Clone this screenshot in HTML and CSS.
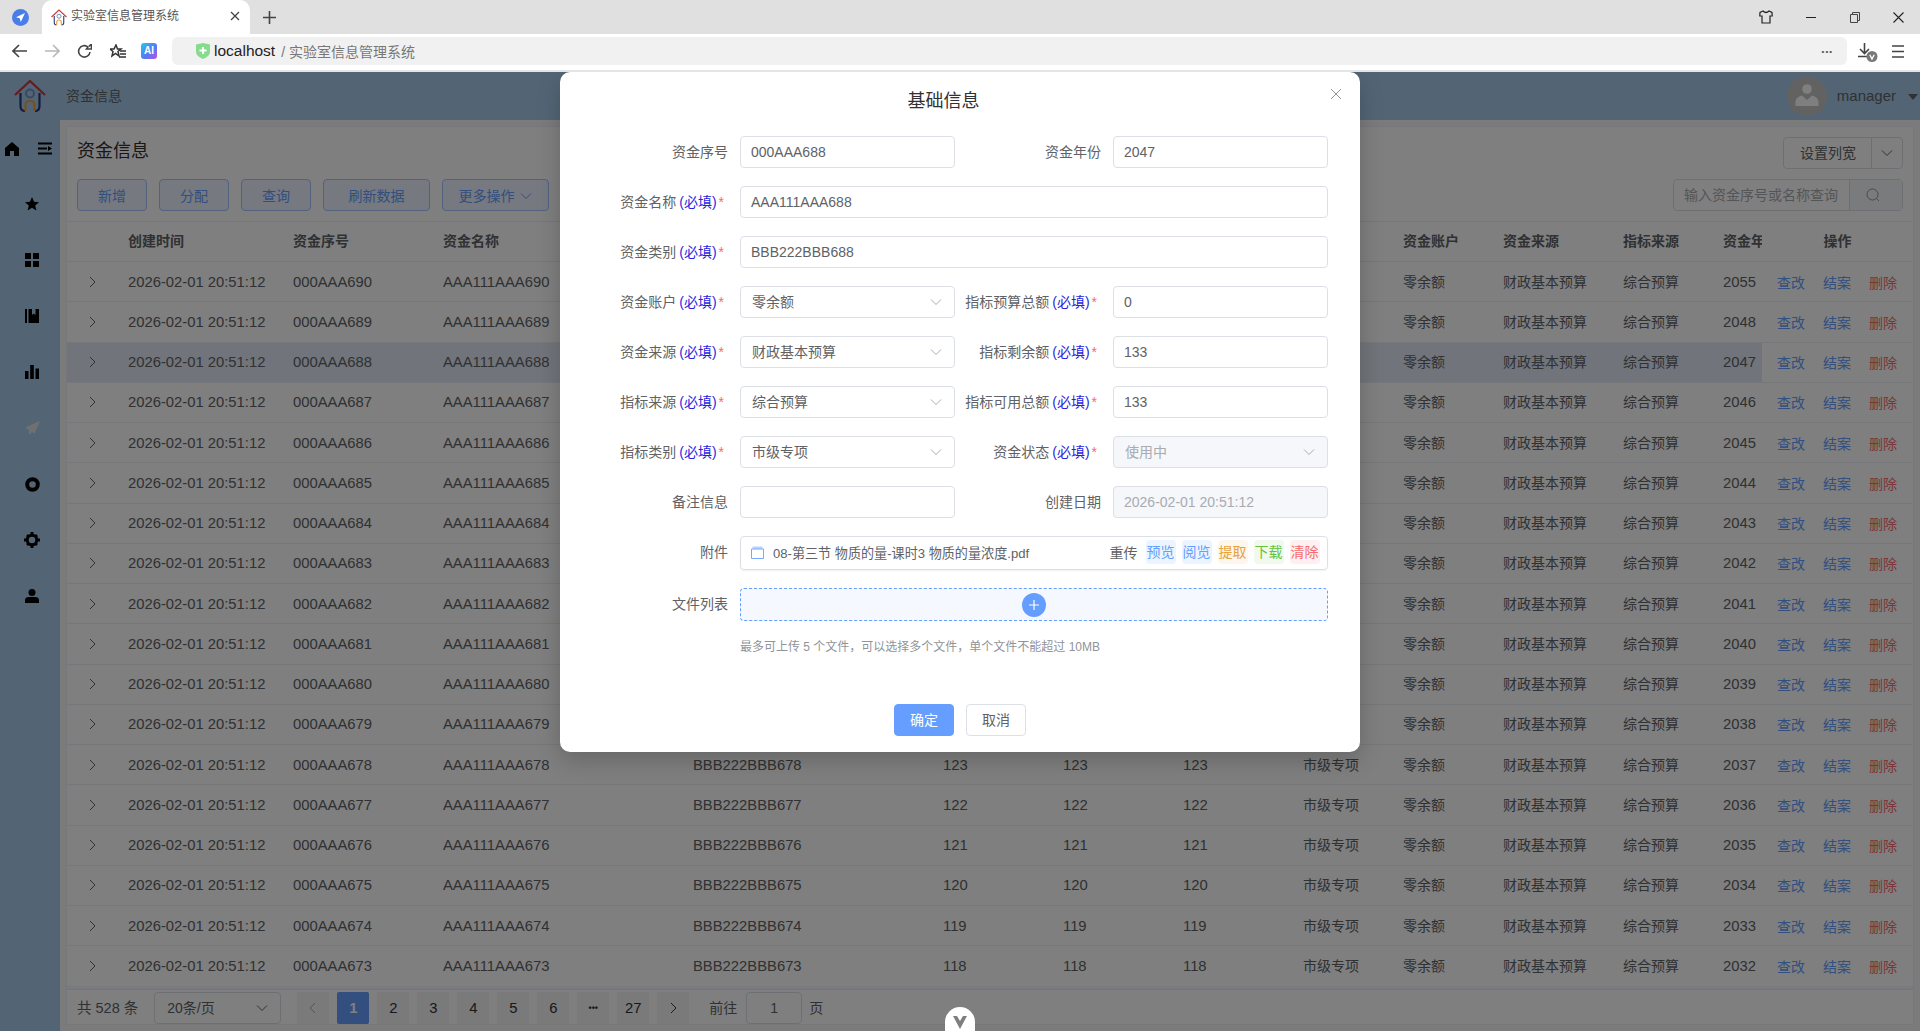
FILE: index.html
```html
<!DOCTYPE html>
<html lang="zh-CN">
<head>
  <meta charset="UTF-8">
  <meta name="viewport" content="width=device-width, initial-scale=1.0">
  <title>实验室信息管理系统</title>
  <link rel="stylesheet" href="styles.css">
</head>
<body>
  <svg class="defs" width="0" height="0">
    <symbol id="house" viewBox="0 0 32 32">
      <path d="M1 15 16 1 31 15" fill="none" stroke="#c93a3a" stroke-width="2.2"/>
      <path d="M6.500 13V26Q6.500 31 11 31M25.500 13V26Q25.500 31 21 31" fill="none" stroke="#2a3a78" stroke-width="2.2"/>
      <circle cx="16" cy="13.500" r="4" fill="none" stroke="#6f93c8" stroke-width="2"/>
      <path d="M11.500 31V25Q11.500 21 16 21T20.500 25V31" fill="none" stroke="#e8a23c" stroke-width="2.2"/>
    </symbol>
    <symbol id="chev" viewBox="0 0 12 12">
      <path d="M1 3.500 6 8.500 11 3.500" fill="none" stroke="currentColor" stroke-width="1"/>
    </symbol>
    <symbol id="arrow-right" viewBox="0 0 12 12">
      <path d="M4 1 9 6 4 11" fill="none" stroke="currentColor" stroke-width="1"/>
    </symbol>
    <symbol id="arrow-left" viewBox="0 0 12 12">
      <path d="M8 1 3 6 8 11" fill="none" stroke="currentColor" stroke-width="1"/>
    </symbol>
  </svg>

  <!-- browser chrome -->
  <div class="browser">
    <div class="tabbar">
      <svg class="tg-icon" width="17" height="17" viewBox="0 0 17 17">
        <circle cx="8.500" cy="8.500" r="8.500" fill="#4a7de8"/>
        <path d="M13 4 4 8.200 7.700 9.300 8.800 13Z" fill="#fff"/>
      </svg>
      <div class="tab">
        <svg class="tab-logo" width="16" height="17"><use href="#house"/></svg>
        <span class="tab-title">实验室信息管理系统</span>
        <svg class="tab-close" width="10" height="10" viewBox="0 0 10 10"><path d="M1 1 9 9M9 1 1 9" stroke="#444" stroke-width="1.300"/></svg>
      </div>
      <svg class="tab-new" width="13" height="13" viewBox="0 0 13 13"><path d="M6.500 0V13M0 6.500H13" stroke="#444" stroke-width="1.600"/></svg>
      <div class="win-btns">
        <svg width="14" height="14" viewBox="0 0 14 14"><path d="M4 1 1 2.500 .8 6 3 6V13H11V6L13.200 6 13 2.500 10 1Q7 4 4 1Z" fill="none" stroke="#222" stroke-width="1.200"/></svg>
        <svg width="10" height="10" viewBox="0 0 10 10"><path d="M0 5.500H10" stroke="#222" stroke-width="1"/></svg>
        <svg width="10" height="11" viewBox="0 0 10 11"><path d="M.5 2.500H7.500V10.500H.5ZM2.500 2.500V.5H9.500V8.500H7.500" fill="none" stroke="#444" stroke-width="1"/></svg>
        <svg width="11" height="11" viewBox="0 0 11 11"><path d="M.5 .5 10.500 10.500M10.500 .5 .5 10.500" stroke="#222" stroke-width="1.100"/></svg>
      </div>
    </div>
    <div class="toolbar">
      <svg class="tool tool-back" width="15" height="14" viewBox="0 0 15 14"><path d="M7 1 1 7 7 13M1 7H15" fill="none" stroke="#444" stroke-width="1.600"/></svg>
      <svg class="tool tool-fwd" width="15" height="14" viewBox="0 0 15 14"><path d="M8 1 14 7 8 13M0 7H14" fill="none" stroke="#b8b8b8" stroke-width="1.600"/></svg>
      <svg class="tool tool-reload" width="15" height="15" viewBox="0 0 15 15"><path d="M13 8A5.700 5.700 0 1 1 11 3L9.500 5H14.500V0L12 2.400" fill="none" stroke="#444" stroke-width="1.600"/></svg>
      <svg class="tool tool-fav" width="16" height="15" viewBox="0 0 16 15"><path d="M6 1 7.500 5H11L8 7.500 9 12 5.500 9.500 2 12 3 7.500 0 5H4Z" fill="none" stroke="#333" stroke-width="1.500"/><path d="M10 7H16M10 10H16M9 13H16" stroke="#333" stroke-width="1.500"/></svg>
      <div class="tool tool-ai">AI</div>
      <div class="address">
        <svg class="shield" width="14" height="16" viewBox="0 0 14 16"><path d="M0 1.500 7 0 14 1.500V9Q14 13 7 16 0 13 0 9Z" fill="#86dc8d"/><path d="M7 4V11M3.500 7.500H10.500" stroke="#fff" stroke-width="2"/></svg>
        <span class="host">localhost</span>
        <span class="path">/ 实验室信息管理系统</span>
        <span class="addr-more">•••</span>
      </div>
      <svg class="tool tool-dl" width="22" height="22" viewBox="0 0 22 22"><path d="M7.500 1V11M3 7 7.500 11.500 12 7M1 14.500H12" fill="none" stroke="#444" stroke-width="1.600"/><circle cx="15" cy="14.500" r="5.500" fill="#777"/><path d="M12.800 12.800 15 17 17.200 12.800" fill="none" stroke="#fff" stroke-width="1.300"/></svg>
      <svg class="tool tool-menu" width="12" height="13" viewBox="0 0 12 13"><path d="M0 1H12M0 6.500H12M0 12H12" stroke="#444" stroke-width="1.700"/></svg>
    </div>
  </div>

  <!-- the page itself -->
  <div class="app">
    <header class="topbar">
      <svg class="logo" width="32" height="32"><use href="#house"/></svg>
      <span class="crumb">资金信息</span>
      <div class="user">
        <svg class="avatar" width="40" height="40" viewBox="0 0 40 40">
          <circle cx="20" cy="20" r="20" fill="#c4c4c4"/>
          <circle cx="20" cy="13" r="4.800" fill="#fff"/>
          <path d="M8.500 30V26Q8.500 21 15 19.500L20 24 25 19.500Q31.500 21 31.500 26V30Z" fill="#fff"/>
        </svg>
        <span class="user-name">manager</span>
        <span class="caret"></span>
      </div>
    </header>

    <div class="main">
      <aside class="sidebar">
        <div class="side-top">
          <svg width="14" height="14" viewBox="0 0 14 14"><path d="M7 0 14 6V14H9V9H5V14H0V6Z"/></svg>
          <svg width="14" height="13" viewBox="0 0 14 13"><path d="M0 .5H14V2.500H0ZM0 5.500H9V7.500H0ZM0 10.500H14V12.500H0ZM10 4 14 6.500 10 9Z"/></svg>
        </div>
        <div class="side-item"><svg width="14" height="14" viewBox="0 0 14 14"><path d="M7 0 9 4.700 14 5.200 10.200 8.500 11.400 13.500 7 10.800 2.600 13.500 3.800 8.500 0 5.200 5 4.700Z"/></svg></div>
        <div class="side-item"><svg width="14" height="14" viewBox="0 0 14 14"><path d="M0 0H6V6H0ZM8 0H14V6H8ZM0 8H6V14H0ZM8 8H14V14H8Z"/></svg></div>
        <div class="side-item"><svg width="14" height="14" viewBox="0 0 14 14"><path d="M0 0H2V14H0ZM3.500 0H7V6L8.700 4.500 10.500 6V0H14V14H3.500Z"/></svg></div>
        <div class="side-item"><svg width="14" height="14" viewBox="0 0 14 14"><path d="M0 6H3.500V14H0ZM5.200 0H8.800V14H5.200ZM10.500 3.500H14V14H10.500Z"/></svg></div>
        <div class="side-item"><svg width="15" height="15" viewBox="0 0 15 15"><path d="M15 0 0 6.500 4 9 3.800 14 7 11 9.500 12.500Z" fill="#e0e0e0"/></svg></div>
        <div class="side-item"><svg width="15" height="15" viewBox="0 0 15 15"><circle cx="7.500" cy="7.500" r="5.300" fill="none" stroke="#000" stroke-width="4"/></svg></div>
        <div class="side-item"><svg width="16" height="16" viewBox="0 0 16 16"><circle cx="8" cy="8" r="4.800" fill="none" stroke="#000" stroke-width="3"/><path d="M6.500 0H9.500V3H6.500ZM6.500 13H9.500V16H6.500ZM0 6.500H3V9.500H0ZM13 6.500H16V9.500H13ZM2 4 4 2 6 4 4 6ZM10 12 12 10 14 12 12 14ZM2 12 4 10 6 12 4 14ZM10 4 12 2 14 4 12 6Z"/></svg></div>
        <div class="side-item"><svg width="14" height="14" viewBox="0 0 14 14"><circle cx="7" cy="3.500" r="3.500"/><path d="M0 14V11Q0 8 4 8H10Q14 8 14 11V14Z"/></svg></div>
      </aside>

      <section class="card">
        <div class="card-head">
          <h2 class="card-title">资金信息</h2>
          <div class="split-btn">
            <span class="split-main">设置列宽</span>
            <span class="split-arrow"><svg width="12" height="12"><use href="#chev"/></svg></span>
          </div>
        </div>
        <div class="card-tools">
          <button class="btn-plain">新增</button>
          <button class="btn-plain">分配</button>
          <button class="btn-plain">查询</button>
          <button class="btn-plain btn-wide">刷新数据</button>
          <button class="btn-plain btn-more">更多操作 <svg width="12" height="12"><use href="#chev"/></svg></button>
          <div class="search">
            <span class="search-text">输入资金序号或名称查询</span>
            <span class="search-btn">
              <svg width="14" height="14" viewBox="0 0 14 14"><circle cx="6.500" cy="6.500" r="5.500" fill="none" stroke="currentColor" stroke-width="1"/><path d="M10.500 10.500 13 13" stroke="currentColor" stroke-width="1"/></svg>
            </span>
          </div>
        </div>

        <div class="table-wrap">
          <table class="data-table">
            <colgroup>
              <col style="width:51px"><col style="width:165px"><col style="width:150px"><col style="width:250px">
              <col style="width:250px"><col style="width:120px"><col style="width:120px"><col style="width:120px">
              <col style="width:100px"><col style="width:100px"><col style="width:120px"><col style="width:100px">
              <col style="width:49px"><col style="width:151px">
            </colgroup>
            <thead>
              <tr>
                <th></th><th>创建时间</th><th>资金序号</th><th>资金名称</th><th>资金类别</th>
                <th>指标预算总额</th><th>指标剩余额</th><th>指标可用总额</th><th>指标类别</th>
                <th>资金账户</th><th>资金来源</th><th>指标来源</th><th>资金年份</th>
                <th class="op-cell op-head">操作</th>
              </tr>
            </thead>
            <tbody id="rows"></tbody>
          </table>
        </div>

        <div class="pager">
          <span class="pager-total">共 528 条</span>
          <div class="pager-size">20条/页 <svg width="12" height="12"><use href="#chev"/></svg></div>
          <span class="page-btn page-first"><svg width="12" height="12"><use href="#arrow-left"/></svg></span>
          <span class="page-btn page-on">1</span>
          <span class="page-btn">2</span>
          <span class="page-btn">3</span>
          <span class="page-btn">4</span>
          <span class="page-btn">5</span>
          <span class="page-btn">6</span>
          <span class="page-btn page-dots">•••</span>
          <span class="page-btn">27</span>
          <span class="page-btn"><svg width="12" height="12"><use href="#arrow-right"/></svg></span>
          <span class="pager-goto">前往</span>
          <span class="pager-input">1</span>
          <span class="pager-unit">页</span>
        </div>
      </section>
    </div>

    <div class="mask"></div>

    <!-- dialog -->
    <div class="dialog">
      <h3 class="dialog-title">基础信息</h3>
      <svg class="dialog-close" width="12" height="12" viewBox="0 0 12 12"><path d="M1 1 11 11M11 1 1 11" stroke="#909399" stroke-width="1"/></svg>
      <div class="form">
        <label class="lbl">资金序号</label>
        <div class="field">000AAA688</div>
        <label class="lbl">资金年份</label>
        <div class="field">2047</div>

        <label class="lbl req">资金名称<em>(必填)</em><i>*</i></label>
        <div class="field span3">AAA111AAA688</div>

        <label class="lbl req">资金类别<em>(必填)</em><i>*</i></label>
        <div class="field span3">BBB222BBB688</div>

        <label class="lbl req">资金账户<em>(必填)</em><i>*</i></label>
        <div class="field select">零余额<svg width="12" height="12"><use href="#chev"/></svg></div>
        <label class="lbl req">指标预算总额<em>(必填)</em><i>*</i></label>
        <div class="field">0</div>

        <label class="lbl req">资金来源<em>(必填)</em><i>*</i></label>
        <div class="field select">财政基本预算<svg width="12" height="12"><use href="#chev"/></svg></div>
        <label class="lbl req">指标剩余额<em>(必填)</em><i>*</i></label>
        <div class="field">133</div>

        <label class="lbl req">指标来源<em>(必填)</em><i>*</i></label>
        <div class="field select">综合预算<svg width="12" height="12"><use href="#chev"/></svg></div>
        <label class="lbl req">指标可用总额<em>(必填)</em><i>*</i></label>
        <div class="field">133</div>

        <label class="lbl req">指标类别<em>(必填)</em><i>*</i></label>
        <div class="field select">市级专项<svg width="12" height="12"><use href="#chev"/></svg></div>
        <label class="lbl req">资金状态<em>(必填)</em><i>*</i></label>
        <div class="field select disabled">使用中<svg width="12" height="12"><use href="#chev"/></svg></div>

        <label class="lbl">备注信息</label>
        <div class="field"></div>
        <label class="lbl">创建日期</label>
        <div class="field disabled">2026-02-01 20:51:12</div>

        <label class="lbl">附件</label>
        <div class="attach span3">
          <svg class="attach-icon" width="13" height="13" viewBox="0 0 13 13"><path d="M1.500 .5H11.500V3H1.500Z" fill="#bcd3ff"/><path d="M.5 3H12.500V12.500H.5Z" fill="none" stroke="#7aa8ff" stroke-width="1"/></svg>
          <span class="attach-name">08-第三节 物质的量-课时3 物质的量浓度.pdf</span>
          <span class="attach-redo">重传</span>
          <span class="chip chip-blue">预览</span>
          <span class="chip chip-blue">阅览</span>
          <span class="chip chip-orange">提取</span>
          <span class="chip chip-green">下载</span>
          <span class="chip chip-red">清除</span>
        </div>

        <label class="lbl">文件列表</label>
        <div class="drop span3">
          <span class="drop-plus"><svg width="10" height="10" viewBox="0 0 10 10"><path d="M5 0V10M0 5H10" stroke="#fff" stroke-width="1.200"/></svg></span>
        </div>

        <div class="hint">最多可上传 5 个文件，可以选择多个文件，单个文件不能超过 10MB</div>
      </div>
      <div class="dialog-foot">
        <button class="btn-ok">确定</button>
        <button class="btn-cancel">取消</button>
      </div>
    </div>

    <div class="vue-tab">
      <svg width="14" height="13" viewBox="0 0 14 13"><path d="M0 0H4L7 5 10 0H14L7 13Z" fill="#7f7f7f"/></svg>
    </div>
  </div>

  <script>
    // table rows, newest first
    let html = '';
    for (let id = 690; id >= 673; id--) {
      let amount = id - 555;
      let year = id === 690 ? 2055 : id + 1359;
      html += `<tr class="${id === 688 ? 'row-on' : ''}">
        <td class="expand"><svg width="12" height="12"><use href="#arrow-right"/></svg></td>
        <td class="latin">2026-02-01 20:51:12</td>
        <td class="latin">000AAA${id}</td>
        <td class="latin">AAA111AAA${id}</td>
        <td class="latin">BBB222BBB${id}</td>
        <td class="latin">${amount}</td>
        <td class="latin">${amount}</td>
        <td class="latin">${amount}</td>
        <td>市级专项</td>
        <td>零余额</td>
        <td>财政基本预算</td>
        <td>综合预算</td>
        <td class="latin">${year}</td>
        <td class="op-cell">
          <a class="op-link">查改</a><a class="op-link">结案</a><a class="op-link op-del">删除</a>
        </td>
      </tr>`;
    }
    document.querySelector('#rows').innerHTML = html;
  </script>
</body>
</html>
```

FILE: styles.css
```css
/* Basic layout */
* {
  box-sizing: border-box;
}

html, body {
  height: 100%;
}

body {
  margin: 0;
  display: flex;
  flex-direction: column;
  overflow: hidden;
  font-family: "Liberation Sans", "Noto Sans CJK SC", sans-serif;
  font-size: 14px;
  color: #606266;
  background: #fff;
}

.defs {
  position: absolute;
}

/* Browser chrome */
.browser {
  height: 72px;
  flex: none;
}

.tabbar {
  height: 34px;
  background: #e0e0e0;
  display: flex;
  align-items: center;
  padding-left: 12px;
}

.tg-icon {
  margin-right: 13px;
}

.tab {
  width: 208px;
  height: 34px;
  background: #fff;
  border-radius: 10px 10px 0 0;
  display: flex;
  align-items: center;
  padding-left: 9px;
}

.tab-title {
  margin: -3px 0 0 4px;
  font-size: 12px;
  line-height: 16px;
  color: #555;
  flex: 1;
}

.tab-close {
  margin-right: 10px;
  margin-top: -3px;
}

.tab-new {
  margin-left: 13px;
}

.win-btns {
  margin-left: auto;
  display: flex;
  align-items: center;
  width: 176px;
  justify-content: space-between;
  padding: 0 16px 0 15px;
}

.toolbar {
  height: 38px;
  border-bottom: 2px solid #e4e4e4;
  display: flex;
  align-items: center;
  padding: 0 16px 2px 12px;
}

.tool-back {
  margin-right: 18px;
}

.tool-fwd {
  margin-right: 17px;
}

.tool-reload {
  margin-right: 18px;
}

.tool-fav {
  margin-right: 15px;
}

.tool-ai {
  width: 16px;
  height: 16px;
  border-radius: 3px;
  background: linear-gradient(135deg, #29c6f0, #4f7cf5 55%, #c04fe0);
  color: #fff;
  font-size: 10px;
  font-weight: bold;
  line-height: 16px;
  text-align: center;
  margin-right: 15px;
}

.address {
  flex: 1;
  height: 28px;
  background: #f1f1f1;
  border-radius: 6px;
  display: flex;
  align-items: center;
  padding: 0 14px 0 24px;
}

.shield {
  margin-right: 4px;
}

.host {
  color: #222;
  font-size: 15.500px;
}

.path {
  margin-left: 6px;
  color: #777;
}

.addr-more {
  margin-left: auto;
  font-size: 8px;
  letter-spacing: 1px;
  color: #555;
}

.tool-dl {
  margin-left: 10px;
  margin-top: 3px;
}

.tool-menu {
  margin-left: 13px;
}

/* App frame */
.app {
  flex: 1;
  min-height: 0;
  position: relative;
  display: flex;
  flex-direction: column;
  overflow: hidden;
  background: #a7cbeb;
}

.topbar {
  height: 48px;
  flex: none;
  display: flex;
  align-items: center;
  padding: 0 0 0 14px;
}

.crumb {
  margin: -1px 0 0 20px;
  line-height: 20px;
}

.user {
  margin-left: auto;
  display: flex;
  align-items: center;
}

.user-name {
  margin: -1px 0 0 10px;
  font-size: 15px;
  line-height: 20px;
}

.caret {
  margin: 2px 2px 0 12px;
  border: 5px solid transparent;
  border-top: 6px solid #606266;
  border-bottom: 0;
}

.main {
  flex: 1;
  min-height: 0;
  display: flex;
  background: #f6f6f6;
}

/* Sidebar */
.sidebar {
  width: 60px;
  flex: none;
  padding-top: 1px;
  background: #a7cbeb;
}

.side-top {
  height: 55px;
  display: flex;
  align-items: center;
  justify-content: space-between;
  padding: 0 8px 0 5px;
}

.side-item {
  height: 56px;
  display: flex;
  align-items: center;
  justify-content: center;
  padding-left: 4px;
}

/* Card */
.card {
  flex: 1;
  min-width: 0;
  margin: 6px;
  background: #fff;
  border: 1px solid #ebeef5;
  display: flex;
  flex-direction: column;
}

.card-head {
  display: flex;
  align-items: flex-start;
  justify-content: space-between;
  padding: 10px 10px 0;
}

.card-title {
  margin: 2px 0 0;
  font-size: 18px;
  line-height: 24px;
  font-weight: normal;
  color: #303133;
}

.split-btn {
  display: flex;
  height: 32px;
  border: 1px solid #dcdfe6;
  border-radius: 4px;
  line-height: 30px;
}

.split-main {
  width: 88px;
  padding-left: 1px;
  text-align: center;
  border-right: 1px solid #dcdfe6;
}

.split-arrow {
  width: 30px;
  display: flex;
  align-items: center;
  justify-content: center;
}

.card-tools {
  display: flex;
  gap: 12px;
  padding: 10px 10px;
}

.btn-plain {
  width: 70px;
  height: 32px;
  padding: 0;
  font: inherit;
  color: #659eff;
  background: #ecf2ff;
  border: 1px solid #a5c4ff;
  border-radius: 4px;
}

.btn-wide {
  width: 107px;
}

.btn-more {
  width: 107px;
}

.btn-more svg {
  margin-left: 2px;
  vertical-align: -1px;
}

.search {
  margin-left: auto;
  width: 230px;
  height: 32px;
  display: flex;
  border: 1px solid #dcdfe6;
  border-radius: 4px;
  line-height: 30px;
}

.search-text {
  flex: 1;
  padding-left: 10px;
  color: #a8abb2;
}

.search-btn {
  width: 53px;
  display: flex;
  align-items: center;
  padding-left: 16px;
  border-left: 1px solid #dcdfe6;
  background: #f5f7fa;
  color: #909399;
}

/* Table */
.table-wrap {
  flex: 1;
  min-height: 0;
  overflow: hidden;
  border-bottom: 2px solid #ebeef5;
}

.data-table {
  table-layout: fixed;
  width: 1846px;
  border-collapse: collapse;
  line-height: 20px;
}

.data-table th {
  height: 40px;
  padding: 0 10px 2px;
  text-align: left;
  font-weight: bold;
  white-space: nowrap;
  overflow: hidden;
  color: #606266;
  border-top: 1px solid #ebeef5;
  border-bottom: 1px solid #ebeef5;
}

.data-table td {
  height: 40.25px;
  padding: 0 10px;
  white-space: nowrap;
  overflow: hidden;
  border-bottom: 1px solid #ebeef5;
}

.data-table .latin {
  font-size: 14.800px;
}

.data-table .expand {
  padding: 0 0 0 19px;
  color: #606266;
}

.expand svg {
  display: block;
}

.row-on td {
  background: #e2e9f5;
}

.data-table .op-cell {
  padding: 2px 0 0 15px;
  background: #fff;
  box-shadow: -3px 0 6px rgba(0, 0, 0, .06);
  position: relative;
}

.data-table .op-head {
  padding: 0 0 2px;
  text-align: center;
}

.op-link {
  display: inline-block;
  width: 46px;
  color: #659eff;
}

.op-del {
  color: #f56c6c;
}

/* Pagination */
.pager {
  height: 34px;
  flex: none;
  padding: 0 0 0 10px;
  display: flex;
  align-items: flex-end;
  line-height: 32px;
}

.pager-total {
  font-size: 14.500px;
}

.pager-size {
  width: 127px;
  height: 32px;
  margin-left: 16px;
  padding: 0 12px;
  display: flex;
  align-items: center;
  justify-content: space-between;
  border: 1px solid #dcdfe6;
  border-radius: 4px;
}

.page-btn {
  width: 32px;
  height: 32px;
  margin-left: 8px;
  display: flex;
  align-items: center;
  justify-content: center;
  background: #f4f4f5;
  font-size: 14.800px;
  color: #303133;
  border-radius: 2px;
}

.page-first {
  margin-left: 16px;
  color: #a8abb2;
}

.page-on {
  background: #659eff;
  color: #fff;
  font-weight: bold;
}

.page-btn.page-dots {
  font-size: 9px;
  font-weight: bold;
}

.pager-goto {
  margin-left: 20px;
}

.pager-input {
  width: 56px;
  height: 32px;
  margin-left: 9px;
  border: 1px solid #dcdfe6;
  border-radius: 4px;
  line-height: 30px;
  text-align: center;
}

.pager-unit {
  margin-left: 7px;
}

/* Overlay and dialog */
.mask {
  position: absolute;
  inset: 0;
  background: rgba(0, 0, 0, .5);
}

.dialog {
  position: absolute;
  left: 560px;
  top: 0;
  width: 800px;
  height: 680px;
  background: #fff;
  border-radius: 10px;
  box-shadow: 0 8px 24px rgba(0, 0, 0, .2);
}

.dialog-title {
  margin: 0;
  height: 64px;
  padding: 17px 33px 0 0;
  line-height: 24px;
  text-align: center;
  font-size: 18px;
  font-weight: normal;
  color: #303133;
}

.dialog-close {
  position: absolute;
  top: 16px;
  right: 18px;
}

.form {
  display: grid;
  grid-template-columns: 140px 214.500px 158.500px 214.500px;
  grid-auto-rows: auto;
  row-gap: 18px;
  padding-left: 40px;
}

.lbl {
  line-height: 32px;
  text-align: right;
  padding-right: 12px;
  white-space: nowrap;
}

.lbl.req {
  padding-right: 16px;
}

.lbl em {
  font-style: normal;
  color: #2a1fe0;
  margin-left: 3px;
}

.lbl i {
  font-style: normal;
  color: #f56c6c;
  margin-left: 2px;
}

.field {
  height: 32px;
  padding: 0 10px;
  line-height: 30px;
  border: 1px solid #dcdfe6;
  border-radius: 4px;
  background: #fff;
}

.span3 {
  grid-column: span 3;
}

.select {
  display: flex;
  align-items: center;
  justify-content: space-between;
  padding: 0 12px 0 11px;
  color: #606266;
}

.select svg {
  color: #a8abb2;
}

.disabled {
  background: #f5f7fa;
  color: #a8abb2;
}

.attach {
  height: 34px;
  padding: 0 7px 2px 10px;
  display: flex;
  align-items: center;
  gap: 6px;
  border: 1px solid #dcdfe6;
  border-radius: 4px;
  box-shadow: 0 1px 2px rgba(0, 0, 0, .06);
}

.attach-icon {
  margin-right: 3px;
}

.attach-name {
  flex: 1;
  font-size: 13.100px;
  white-space: nowrap;
}

.attach-redo {
  margin-right: 2px;
}

.chip {
  width: 30px;
  height: 24px;
  line-height: 24px;
  text-align: center;
  border-radius: 4px;
}

.chip-blue {
  color: #659eff;
  background: #ecf5ff;
}

.chip-orange {
  color: #e6a23c;
  background: #fdf6ec;
}

.chip-green {
  color: #67c23a;
  background: #f0f9eb;
}

.chip-red {
  color: #f56c6c;
  background: #fef0f0;
}

.drop {
  height: 33px;
  display: flex;
  align-items: center;
  justify-content: center;
  border: 1px dashed #659eff;
  border-radius: 4px;
  background: #f5f8ff;
}

.drop-plus {
  width: 24px;
  height: 24px;
  display: flex;
  align-items: center;
  justify-content: center;
  border-radius: 50%;
  background: #659eff;
}

.hint {
  grid-column: 2 / span 3;
  height: 16px;
  line-height: 16px;
  font-size: 12px;
  color: #909399;
}

.dialog-foot {
  margin-top: 49px;
  display: flex;
  gap: 12px;
  padding-left: 334px;
}

.btn-ok,
.btn-cancel {
  width: 60px;
  height: 32px;
  padding: 0 0 2px;
  font: inherit;
  border-radius: 4px;
}

.btn-ok {
  color: #fff;
  background: #659eff;
  border: 1px solid #659eff;
}

.btn-cancel {
  color: #606266;
  background: #fff;
  border: 1px solid #dcdfe6;
}

/* Devtools tab at the bottom edge */
.vue-tab {
  position: absolute;
  left: 945px;
  bottom: 0;
  width: 30px;
  height: 24px;
  padding-top: 9px;
  display: flex;
  justify-content: center;
  align-items: flex-start;
  background: #fff;
  border-radius: 15px 15px 0 0;
}
```
